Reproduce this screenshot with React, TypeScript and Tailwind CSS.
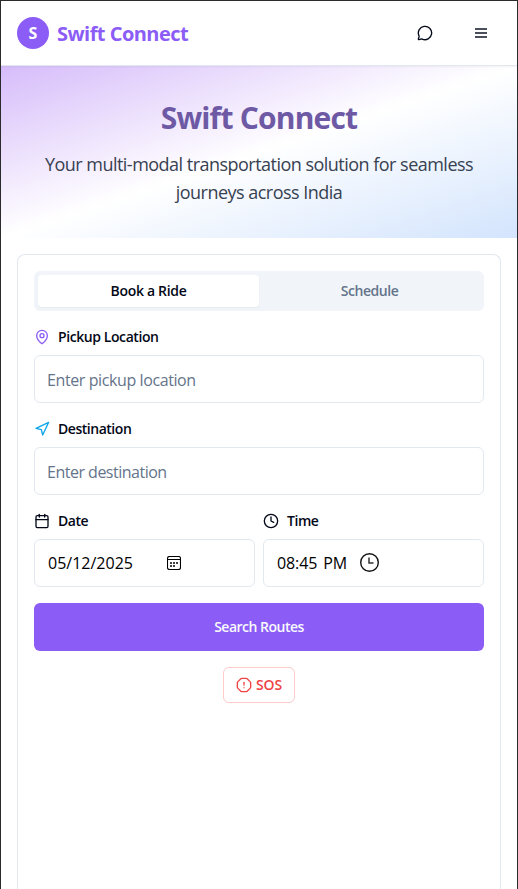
import type { ReactNode } from "react";
import { Calendar, Clock, MapPin, MessageCircle, Navigation, OctagonAlert } from "lucide-react";

function FieldLabel({ icon, text, tracking }: { icon: ReactNode; text: string; tracking: string }) {
  return (
    <div className="flex h-5 items-center gap-2 text-sm font-semibold">
      {icon}
      <span className={`whitespace-nowrap ${tracking}`}>{text}</span>
    </div>
  );
}

function MenuGlyph() {
  return (
    <svg width="16" height="16" viewBox="0 0 16 16" fill="#4b4e5b" className="shrink-0">
      <rect x="2" y="3" width="12" height="2" />
      <rect x="2" y="7" width="12" height="2" />
      <rect x="2" y="11" width="12" height="2" />
    </svg>
  );
}

function CalendarGlyph() {
  return (
    <svg width="14" height="14" viewBox="0 0 14 14" fill="none" stroke="#000" className="shrink-0">
      <rect x="0.5" y="0.5" width="13" height="13" rx="2" strokeWidth="1.1" />
      <path d="M0.5 3.5H13.5" />
      <path d="M3 7h2M6 7h2M9 7h2M3 10h2M6 10h2" strokeWidth="1.6" />
    </svg>
  );
}

function ClockGlyph() {
  return (
    <svg width="20" height="20" viewBox="0 0 20 20" fill="none" stroke="#111" strokeWidth="1.4" className="shrink-0">
      <circle cx="9.5" cy="9.5" r="8.8" />
      <path d="M9 4.5V10H13.5" stroke="#333" strokeWidth="1.5" />
    </svg>
  );
}

export default function App() {
  return (
    <div className="flex h-[889px] w-[518px] flex-col overflow-hidden border-x border-t border-[#2b2b2d] bg-white font-['Open_Sans','Noto_Sans',sans-serif] text-[#020817]">
      <header className="z-10 flex h-[65px] shrink-0 items-center justify-between border-b border-[#e2e8f0] bg-white px-4 shadow-[0_1px_2px_0_rgb(0_0_0/0.05)]">
        <div className="flex items-center gap-2">
          <div className="flex size-8 items-center justify-center rounded-full bg-[#8b5cf6] text-base font-bold text-white">S</div>
          <span className="whitespace-nowrap pt-0.5 text-xl font-bold tracking-[-0.53px] text-[#8b5cf6]">Swift Connect</span>
        </div>
        <div className="flex items-center gap-4">
          <button className="flex size-10 items-center justify-center"><MessageCircle size={16} /></button>
          <button className="flex size-10 items-center justify-center"><MenuGlyph /></button>
        </div>
      </header>

      <section className="h-[172px] shrink-0 bg-[linear-gradient(to_bottom_right,#d6bcfa,#ffffff,#d3e4fd)] px-4 pt-[34px] text-center">
        <h1 className="mb-3.5 text-3xl leading-9 font-bold tracking-[-0.8px] text-[#6e59a5]">Swift Connect</h1>
        <p className="text-lg leading-7 tracking-[-0.52px] text-[#374151]">
          <span className="block whitespace-nowrap">Your multi-modal transportation solution for seamless</span>
          <span className="block whitespace-nowrap">journeys across India</span>
        </p>
      </section>

      <main className="flex grow flex-col px-4 pt-4">
        <div className="flex grow flex-col rounded-t-lg border-x border-t border-[#e2e8f0] p-4">
          <div className="grid h-10 shrink-0 grid-cols-2 rounded-md bg-[#f1f5f9] p-1 text-sm font-semibold">
            <button className="rounded-sm bg-white tracking-[-0.3px] shadow-[0_1px_2px_0_rgb(0_0_0/0.05)]">Book a Ride</button>
            <button className="tracking-[-0.45px] text-[#64748b]">Schedule</button>
          </div>

          <div className="mt-4 flex flex-col gap-2">
            <FieldLabel icon={<MapPin size={16} color="#8b5cf6" />} text="Pickup Location" tracking="tracking-[-0.42px]" />
            <div className="flex h-12 items-center rounded-md border border-[#e2e8f0] px-3 pt-0.5 text-base tracking-[-0.4px] text-[#64748b]">Enter pickup location</div>
          </div>

          <div className="mt-4 flex flex-col gap-2">
            <FieldLabel icon={<Navigation size={16} color="#0ea5e9" />} text="Destination" tracking="tracking-[-0.47px]" />
            <div className="flex h-12 items-center rounded-md border border-[#e2e8f0] px-3 pt-0.5 text-base tracking-[-0.5px] text-[#64748b]">Enter destination</div>
          </div>

          <div className="mt-4 grid grid-cols-2 gap-2">
            <div className="flex flex-col gap-2">
              <FieldLabel icon={<Calendar size={16} />} text="Date" tracking="tracking-[-0.45px]" />
              <div className="flex h-12 items-center rounded-md border border-[#e2e8f0] px-3 text-base text-black">
                <span className="w-[120px] pl-px">05/12/2025</span>
                <CalendarGlyph />
              </div>
            </div>
            <div className="flex flex-col gap-2">
              <FieldLabel icon={<Clock size={16} />} text="Time" tracking="tracking-[-0.45px]" />
              <div className="flex h-12 items-center rounded-md border border-[#e2e8f0] px-3 text-base text-black">
                <span className="flex w-[84px] gap-1.5 pl-px">
                  <span className="tracking-[-0.1px]">08:45</span>
                  <span className="tracking-[-0.3px]">PM</span>
                </span>
                <ClockGlyph />
              </div>
            </div>
          </div>

          <button className="mt-4 h-12 shrink-0 rounded-md bg-[#8b5cf6] text-sm font-semibold tracking-[-0.5px] text-[#f8fafc]">Search Routes</button>

          <button className="mt-4 flex h-9 w-[72px] shrink-0 items-center justify-center gap-1 self-center rounded-md border border-[#fecaca] text-sm font-semibold text-[#ef4444]">
            <OctagonAlert size={16} className="shrink-0" />
            <span className="tracking-[-0.2px]">SOS</span>
          </button>
        </div>
      </main>
    </div>
  );
}
